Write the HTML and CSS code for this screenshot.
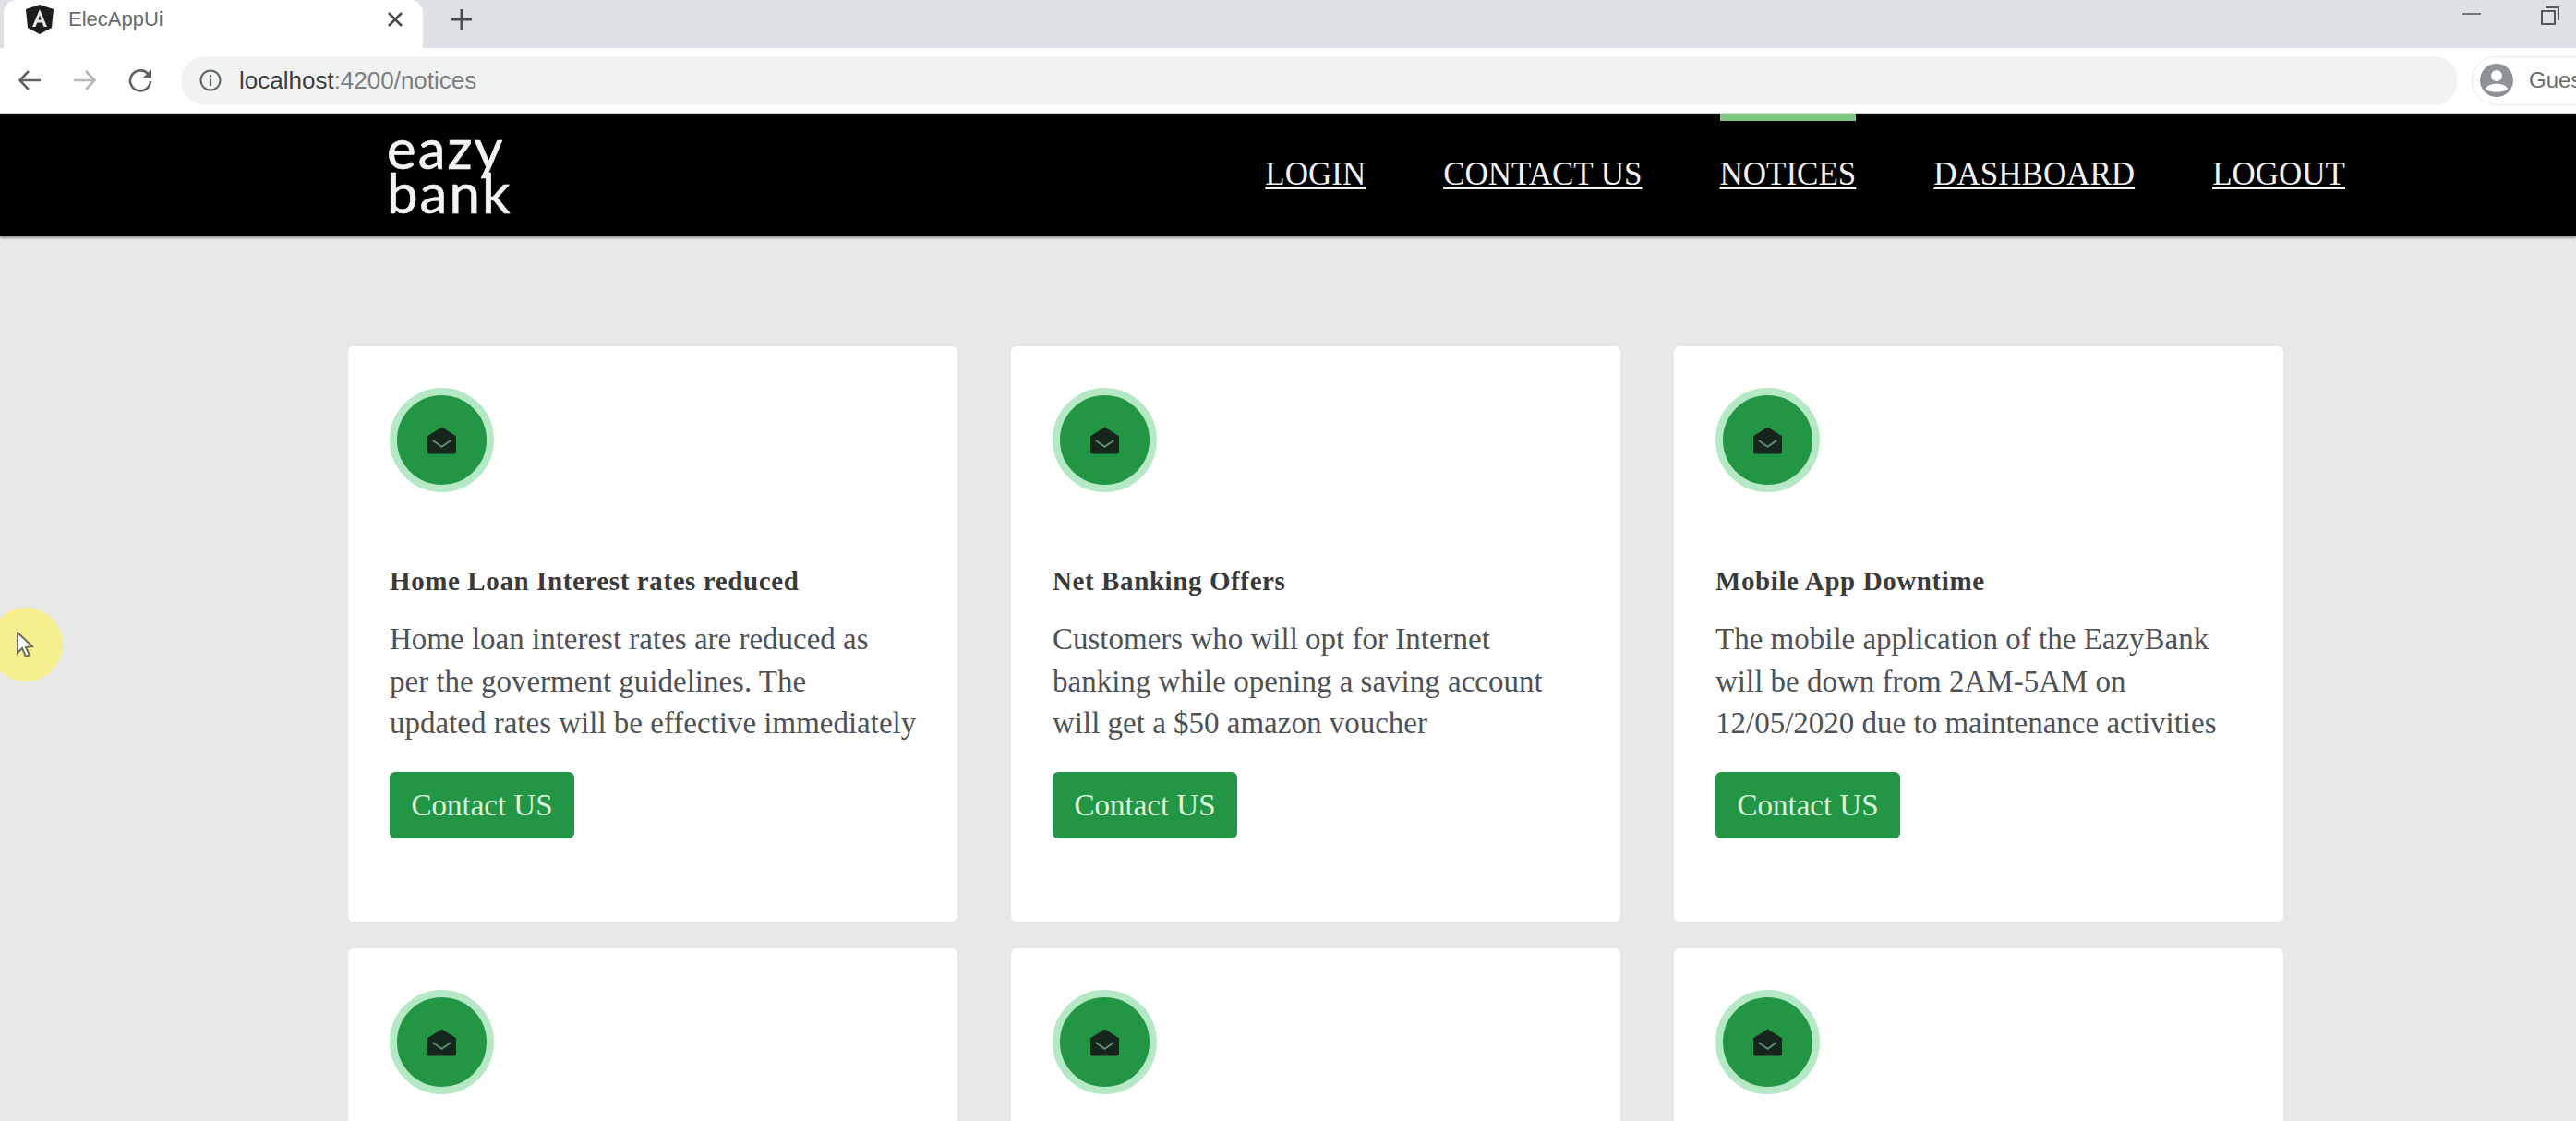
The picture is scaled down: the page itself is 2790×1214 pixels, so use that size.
FILE: index.html
```html
<!DOCTYPE html>
<html lang="en">
<head>
  <meta charset="UTF-8">
  <title>ElecAppUi</title>
  <link rel="stylesheet" href="styles.css">
</head>
<body>
  <div class="tabstrip">
    <div class="tab">
      <svg class="tab-icon" viewBox="0 0 30 32">
        <path d="M15 0 L30 5 L28 25 L15 32 L2 25 L0 5 Z" fill="#1c1c1e"/>
        <path d="M15 5 L7 24 H10.500 L12.300 19.500 H17.700 L19.500 24 H23 Z M15 11.500 L16.700 16.500 H13.300 Z" fill="#e8e8e8" fill-rule="evenodd"/>
      </svg>
      <span class="tab-title">ElecAppUi</span>
      <svg class="tab-close" viewBox="0 0 16 16">
        <path d="M1 1 L15 15 M15 1 L1 15" stroke="#44474a" stroke-width="2.600" fill="none"/>
      </svg>
    </div>
    <svg class="new-tab" viewBox="0 0 22 22">
      <path d="M11 0 V22 M0 11 H22" stroke="#4a4d50" stroke-width="3" fill="none"/>
    </svg>
    <div class="window-btns">
      <svg class="win-min" viewBox="0 0 20 2"><rect width="20" height="2" fill="#70757a"/></svg>
      <svg class="win-restore" viewBox="0 0 20 20">
        <path d="M5 1 H19 V15 M1 5 H15 V19 H1 Z" stroke="#55595d" stroke-width="2" fill="none"/>
      </svg>
    </div>
  </div>

  <div class="toolbar">
    <svg class="nav-arrow" viewBox="0 0 24 22">
      <path d="M24 11 H2 M11 1 L1.500 11 L11 21" stroke="#5f6368" stroke-width="2.600" fill="none"/>
    </svg>
    <svg class="nav-arrow arrow-off" viewBox="0 0 24 22">
      <path d="M0 11 H22 M13 1 L22.500 11 L13 21" stroke="#b4b7ba" stroke-width="2.600" fill="none"/>
    </svg>
    <svg class="nav-reload" viewBox="0 0 26 26">
      <path d="M22 7 A11 11 0 1 0 24 14" stroke="#5f6368" stroke-width="2.600" fill="none"/>
      <path d="M25 1 V10 H16 Z" fill="#5f6368"/>
    </svg>
    <div class="address-bar">
      <svg class="info-icon" viewBox="0 0 24 24">
        <circle cx="12" cy="12" r="10.500" stroke="#5f6368" stroke-width="2" fill="none"/>
        <path d="M12 10.500 V18 M12 6 V8.500" stroke="#5f6368" stroke-width="2.200"/>
      </svg>
      <span class="url"><span class="url-host">localhost</span>:4200/notices</span>
    </div>
    <div class="profile-pill">
      <svg class="avatar" viewBox="0 0 36 36">
        <circle cx="18" cy="18" r="18" fill="#8e9195"/>
        <circle cx="18" cy="13" r="6" fill="#fff"/>
        <path d="M6 27 C9 20 27 20 30 27 C26 32 10 32 6 27 Z" fill="#fff"/>
      </svg>
      <span class="profile-name">Guest</span>
    </div>
  </div>

  <header class="site-header">
    <a class="logo">eazy<br>bank</a>
    <nav class="site-nav">
      <a class="nav-link">LOGIN</a>
      <a class="nav-link">CONTACT US</a>
      <a class="nav-link active">NOTICES</a>
      <a class="nav-link">DASHBOARD</a>
      <a class="nav-link">LOGOUT</a>
    </nav>
  </header>

  <main class="notices">
    <article class="card">
      <div class="card-icon">
        <svg viewBox="0 0 32 30"><path d="M16 0 L32 10 V28 A2 2 0 0 1 30 30 H2 A2 2 0 0 1 0 28 V10 Z" fill="#16261f"/><path d="M6 15 L16 22 L26 15" stroke="#5f8f70" stroke-width="2" fill="none"/></svg>
      </div>
      <h3 class="card-title">Home Loan Interest rates reduced</h3>
      <p class="card-text">Home loan interest rates are reduced as<br>per the goverment guidelines. The<br>updated rates will be effective immediately</p>
      <a class="card-btn">Contact US</a>
    </article>
    <article class="card">
      <div class="card-icon">
        <svg viewBox="0 0 32 30"><path d="M16 0 L32 10 V28 A2 2 0 0 1 30 30 H2 A2 2 0 0 1 0 28 V10 Z" fill="#16261f"/><path d="M6 15 L16 22 L26 15" stroke="#5f8f70" stroke-width="2" fill="none"/></svg>
      </div>
      <h3 class="card-title">Net Banking Offers</h3>
      <p class="card-text">Customers who will opt for Internet<br>banking while opening a saving account<br>will get a $50 amazon voucher</p>
      <a class="card-btn">Contact US</a>
    </article>
    <article class="card">
      <div class="card-icon">
        <svg viewBox="0 0 32 30"><path d="M16 0 L32 10 V28 A2 2 0 0 1 30 30 H2 A2 2 0 0 1 0 28 V10 Z" fill="#16261f"/><path d="M6 15 L16 22 L26 15" stroke="#5f8f70" stroke-width="2" fill="none"/></svg>
      </div>
      <h3 class="card-title">Mobile App Downtime</h3>
      <p class="card-text">The mobile application of the EazyBank<br>will be down from 2AM-5AM on<br>12/05/2020 due to maintenance activities</p>
      <a class="card-btn">Contact US</a>
    </article>
    <article class="card">
      <div class="card-icon">
        <svg viewBox="0 0 32 30"><path d="M16 0 L32 10 V28 A2 2 0 0 1 30 30 H2 A2 2 0 0 1 0 28 V10 Z" fill="#16261f"/><path d="M6 15 L16 22 L26 15" stroke="#5f8f70" stroke-width="2" fill="none"/></svg>
      </div>
    </article>
    <article class="card">
      <div class="card-icon">
        <svg viewBox="0 0 32 30"><path d="M16 0 L32 10 V28 A2 2 0 0 1 30 30 H2 A2 2 0 0 1 0 28 V10 Z" fill="#16261f"/><path d="M6 15 L16 22 L26 15" stroke="#5f8f70" stroke-width="2" fill="none"/></svg>
      </div>
    </article>
    <article class="card">
      <div class="card-icon">
        <svg viewBox="0 0 32 30"><path d="M16 0 L32 10 V28 A2 2 0 0 1 30 30 H2 A2 2 0 0 1 0 28 V10 Z" fill="#16261f"/><path d="M6 15 L16 22 L26 15" stroke="#5f8f70" stroke-width="2" fill="none"/></svg>
      </div>
    </article>
  </main>

  <div class="cursor-spot">
    <svg class="cursor-arrow" viewBox="0 0 20 28">
      <path d="M2 1 V23 L7 18 L11 27 L15 25 L11 17 L18 16 Z" fill="#fff" stroke="#6e6e58" stroke-width="2"/>
    </svg>
  </div>
</body>
</html>
```

FILE: styles.css
```css
* {
  box-sizing: border-box;
}
html, body {
  height: 1214px;
  overflow: hidden;
}
body {
  margin: 0;
  background: #e8e8e6;
  font-family: 'Liberation Serif', serif;
}

/* browser chrome */
.tabstrip {
  display: flex;
  align-items: center;
  height: 52px;
  background: #dee1e6;
}
.tab {
  display: flex;
  align-items: center;
  width: 454px;
  height: 52px;
  margin-left: 4px;
  padding: 0 22px 10px 24px;
  background: #fff;
  border-radius: 14px 14px 0 0;
}
.tab-icon {
  width: 30px;
  height: 32px;
}
.tab-title {
  flex: 1;
  margin-left: 16px;
  font-family: 'Liberation Sans', sans-serif;
  font-size: 22px;
  color: #686b6e;
}
.tab-close {
  width: 16px;
  height: 16px;
}
.new-tab {
  width: 22px;
  height: 22px;
  margin: 0 0 10px 31px;
}
.window-btns {
  display: flex;
  align-items: flex-start;
  align-self: flex-start;
  gap: 65px;
  margin-left: auto;
  padding: 7px 18px 0 0;
}
.win-min {
  width: 20px;
  height: 2px;
  margin-top: 7px;
}
.win-restore {
  width: 20px;
  height: 20px;
}
.toolbar {
  display: flex;
  align-items: center;
  height: 71px;
  padding-left: 20px;
  background: #fff;
  border-bottom: 1px solid #d8d8d8;
}
.toolbar svg {
  flex: none;
}
.nav-arrow {
  width: 24px;
  height: 22px;
  margin-right: 36px;
}
.arrow-off {
  margin-right: 35px;
}
.nav-reload {
  width: 26px;
  height: 26px;
  margin-right: 31px;
}
.address-bar {
  display: flex;
  align-items: center;
  flex: none;
  width: 2466px;
  height: 53px;
  padding-left: 20px;
  background: #f1f3f2;
  border-radius: 27px;
}
.info-icon {
  width: 24px;
  height: 24px;
}
.url {
  margin-left: 19px;
  font-family: 'Liberation Sans', sans-serif;
  font-size: 26px;
  color: #7c7f82;
}
.url-host {
  color: #3a3d40;
}
.profile-pill {
  display: flex;
  flex: none;
  align-items: center;
  width: 140px;
  height: 53px;
  margin-left: 15px;
  padding-left: 8px;
  border: 1px solid #e8eaed;
  border-radius: 27px;
}
.avatar {
  width: 36px;
  height: 36px;
}
.profile-name {
  margin-left: 17px;
  font-family: 'Liberation Sans', sans-serif;
  font-size: 24px;
  color: #6a6d70;
}

/* site header */
.site-header {
  display: flex;
  justify-content: space-between;
  height: 133px;
  padding: 0 250px 0 419px;
  background: #000;
  box-shadow: 0 2px 2px #9a9a9a;
}
.logo {
  align-self: center;
  padding-bottom: 12px;
  font-family: Lato, sans-serif;
  font-size: 60px;
  line-height: 48px;
  letter-spacing: 2px;
  color: #f4f4f4;
  -webkit-text-stroke: 0.6px #f4f4f4;
}
.site-nav {
  display: flex;
  gap: 84px;
}
.nav-link {
  display: flex;
  align-items: center;
  padding-bottom: 10px;
  border-top: 8px solid transparent;
  font-size: 35px;
  color: #f2f2f2;
  text-decoration: underline;
}
.nav-link.active {
  border-top-color: #7cc680;
}

/* notices */
.notices {
  display: grid;
  grid-template-columns: repeat(3, 660px);
  column-gap: 58px;
  row-gap: 29px;
  padding: 119px 0 0 377px;
}
.card {
  padding: 45px 20px 90px 45px;
  background: #fff;
  border-radius: 6px;
}
.card-icon {
  display: flex;
  align-items: center;
  justify-content: center;
  width: 113px;
  height: 113px;
  background: #239646;
  border: 8px solid #b5e9c5;
  border-radius: 50%;
}
.card-icon svg {
  width: 31px;
  height: 30px;
}
.card-title {
  margin: 79px 0 0;
  font-size: 29px;
  line-height: 34px;
  letter-spacing: 0.6px;
  font-weight: bold;
  color: #3a3a3a;
}
.card-text {
  margin: 24px 0 0;
  font-size: 33px;
  line-height: 45.500px;
  white-space: nowrap;
  color: #4e5257;
}
.card-btn {
  display: flex;
  align-items: center;
  justify-content: center;
  width: 200px;
  height: 72px;
  margin-top: 29.500px;
  background: #239646;
  border-radius: 6px;
  font-size: 33px;
  color: #dcf7dc;
}

/* recorded mouse pointer */
.cursor-spot {
  position: absolute;
  left: -12px;
  top: 658px;
  width: 80px;
  height: 80px;
  background: #f6ef8e;
  border-radius: 50%;
}
.cursor-arrow {
  position: absolute;
  left: 29px;
  top: 26px;
  width: 20px;
  height: 28px;
}
```
